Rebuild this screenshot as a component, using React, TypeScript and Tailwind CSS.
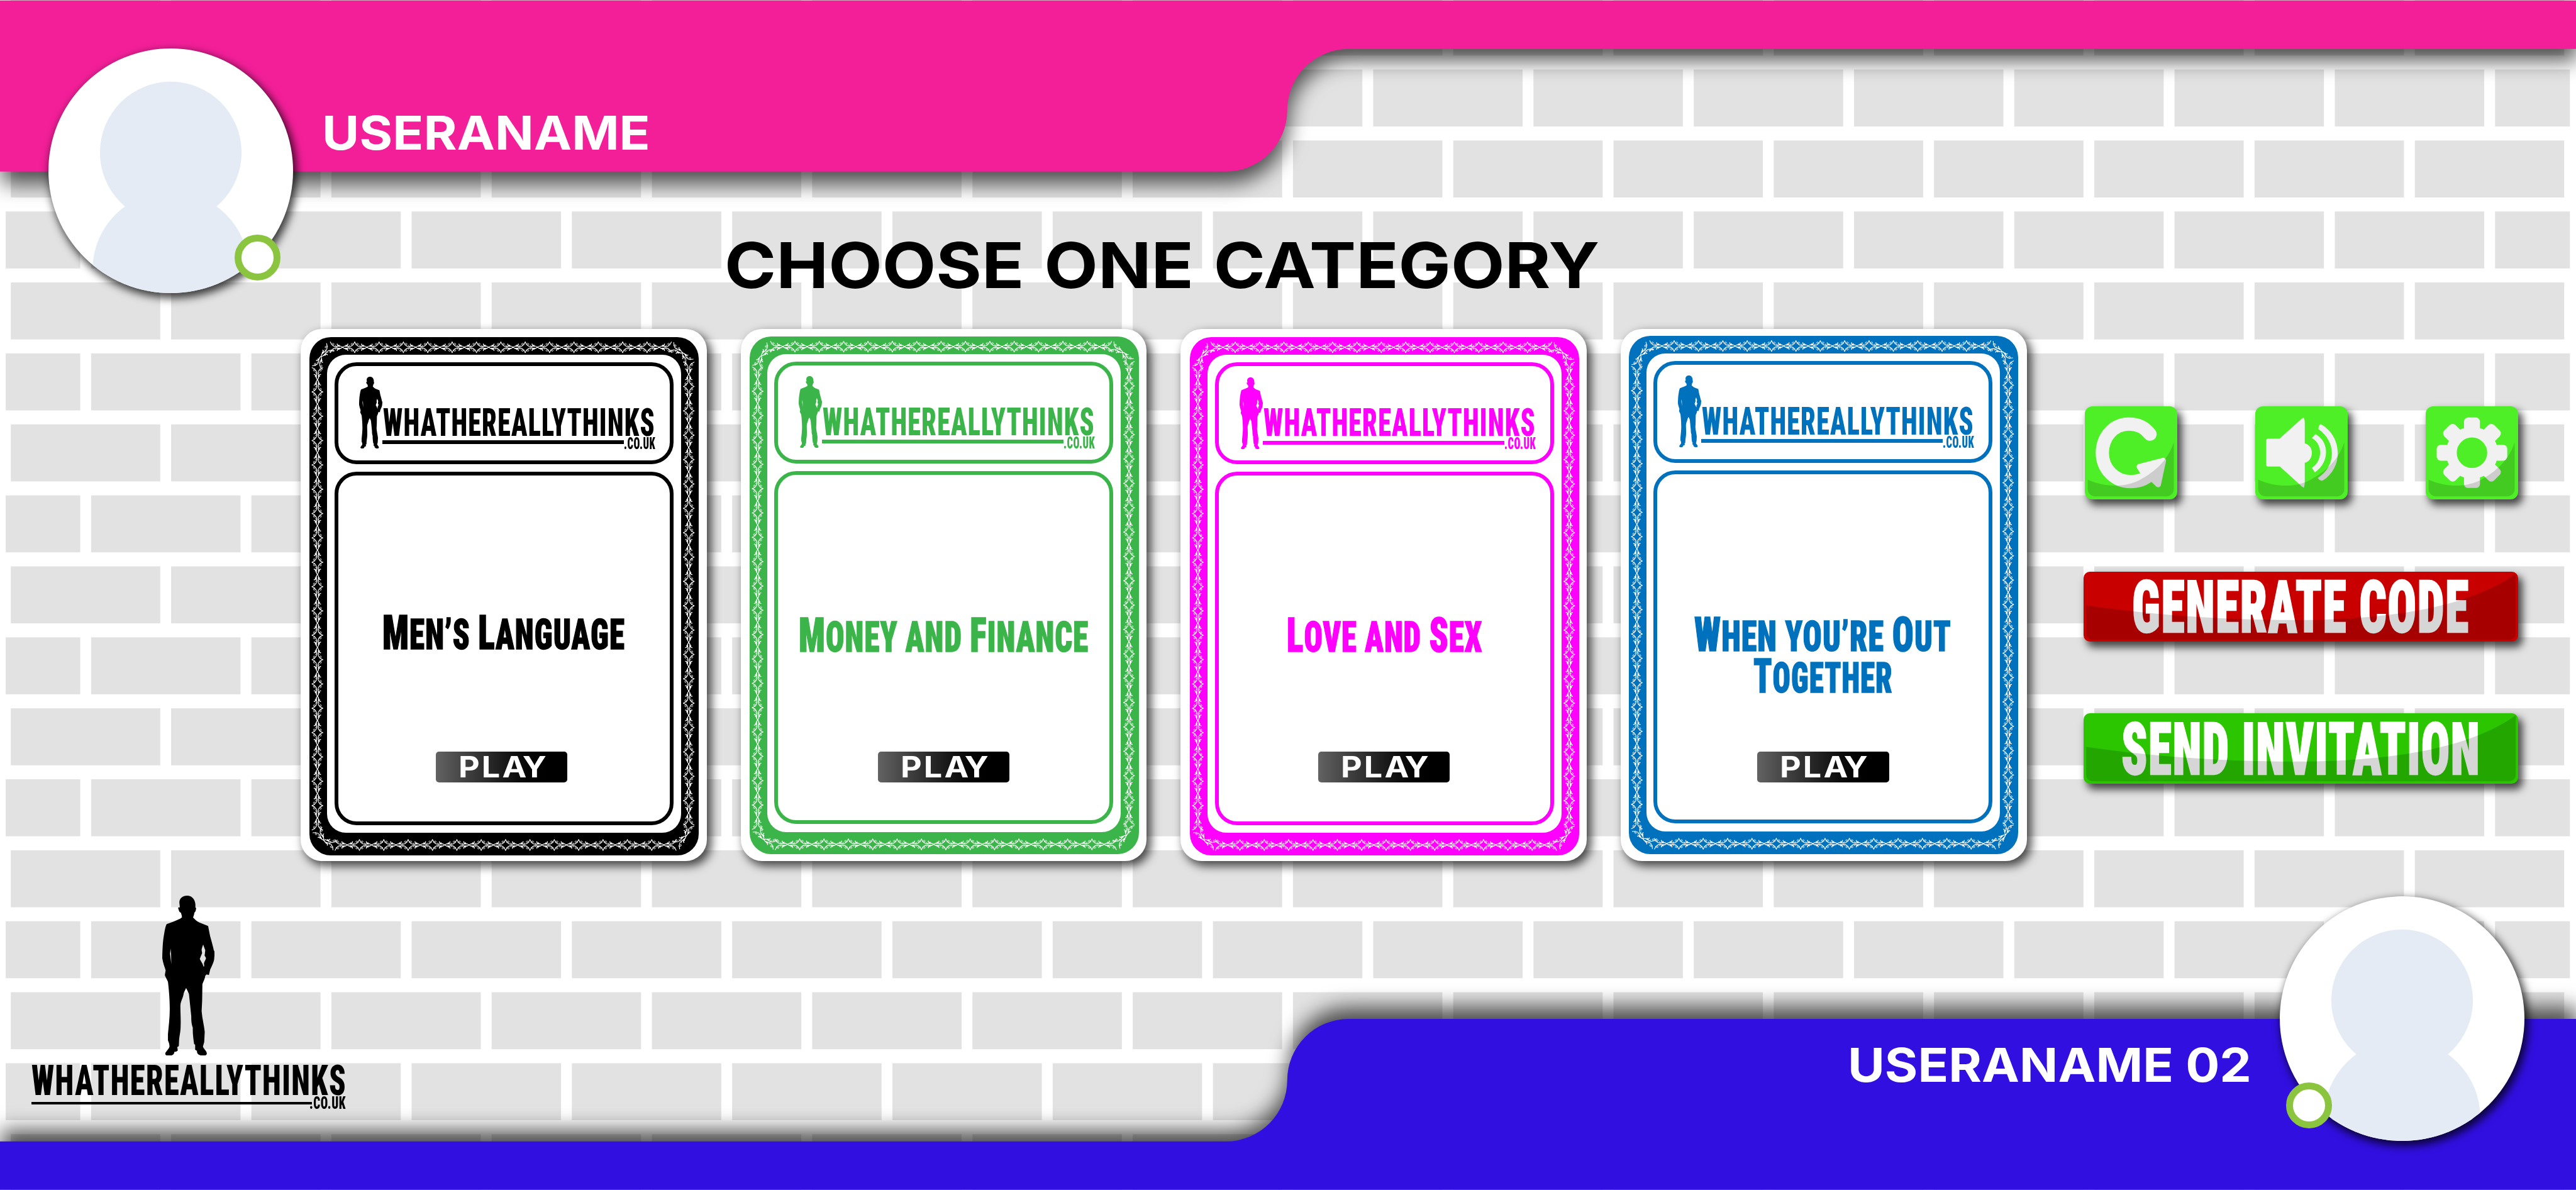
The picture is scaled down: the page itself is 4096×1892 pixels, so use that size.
import { useLayoutEffect, useRef, type ReactNode } from "react";

/* Stretches or squeezes its one line of text to the full width of the box. */
function Fit({ box, text, children }: { box: string; text: string; children: ReactNode }) {
  const outer = useRef<HTMLDivElement>(null);
  const inner = useRef<HTMLSpanElement>(null);
  useLayoutEffect(() => {
    const o = outer.current;
    const i = inner.current;
    if (!o || !i || !i.offsetWidth) return;
    i.style.transform = `scaleX(${o.clientWidth / i.offsetWidth})`;
  }, []);
  return (
    <div ref={outer} className={`flex items-center ${box}`}>
      <span ref={inner} className={`block shrink-0 origin-left whitespace-pre leading-[0.72] ${text}`}>
        {children}
      </span>
    </div>
  );
}

const wide = "font-['Inter',sans-serif] font-bold";
const narrow = "font-['Roboto',sans-serif] font-black [font-stretch:75%] pt-[0.028em] tracking-[0.02em] [-webkit-text-stroke:0.02em]";
const narrowLogo = "font-['Roboto',sans-serif] font-black [font-stretch:75%] pt-[0.028em] tracking-[0.03em]";

function Wall() {
  const rows = Array.from({ length: 17 }, (_, i) => i);
  return (
    <svg className="absolute inset-0 h-full w-full" viewBox="0 0 5076 2345" preserveAspectRatio="none">
      <g fill="#e2e2e2">
        {rows.map((r) => {
          const y = -2.9 + r * 139.87;
          if (r % 2 === 0)
            return Array.from({ length: 16 }, (_, c) => (
              <rect key={`${r}-${c}`} x={21.4 + c * 315.8} y={y} width="294.4" height="112.3" />
            ));
          return Array.from({ length: 17 }, (_, c) => {
            const x = Math.max(11.2, -136.3 + c * 315.8);
            const end = Math.min(5064, 158.1 + c * 315.8);
            return <rect key={`${r}-${c}`} x={x} y={y} width={end - x} height="112.3" />;
          });
        })}
      </g>
    </svg>
  );
}

function Avatar({ ring }: { ring: string }) {
  return (
    <div className="relative h-[389px] w-[389px] shrink-0">
      <div className="h-full w-full overflow-hidden rounded-full bg-white shadow-[4px_6px_14px_2px_rgba(0,0,0,0.75)]">
        <svg className="h-full w-full" viewBox="0 0 482 482" fill="#e4ebf4">
          <circle cx="241" cy="205" r="139.5" />
          <circle cx="241" cy="436" r="154" />
        </svg>
      </div>
      <span className={`absolute h-[73px] w-[73px] rounded-full border-[11.7px] border-[#8bc540] bg-white ${ring}`} />
    </div>
  );
}

function Man({ className }: { className: string }) {
  return (
    <svg className={className} viewBox="626 157 203 767" preserveAspectRatio="none" fill="currentColor">
      <path
        fillRule="evenodd"
        d="M722 157C740 157 753 175 754 200L754 214L757 216C756 228 754 236 750 238C749 250 746 256 745 262C752 272 760 280 768 285L803 302C806 318 808 335 811 352C817 378 822 400 825 418L829 428L826 465C822 485 814 502 811 512L806 537L797 534L792 541C790 560 783 570 781 582L780 660L778 710C780 745 788 780 790 810L788 858L783 880C788 895 799 902 798 915C796 926 780 926 770 920C762 916 760 910 760 900L753 895L753 871L749 868C746 840 743 815 744 790C738 770 738 750 738 735C735 700 732 660 729 628C724 612 720 605 718 599C715 610 710 618 709 624C706 650 697 660 696 685C696 720 698 745 697 780C697 810 692 830 691 850L690 878L684 882L686 899L680 904L673 905C672 918 665 924 652 924C640 924 636 918 638 910C644 898 652 890 654 880C654 865 650 858 648 850L648 820C651 780 655 740 655 700C655 650 651 600 648 570C644 556 638 548 636 537L639 515C634 495 628 475 626 455C627 400 629 370 632 350C636 320 638 305 643 293L668 282C682 275 695 269 702 261C702 250 699 245 698 238C692 238 690 228 687 214L694 213L692 190C692 170 705 157 722 157ZM784 391C780 405 778 412 778 418L780 432L771 460C776 475 783 482 785 497L788 495L787 480C791 468 794 462 795 456C792 448 788 445 790 440L792 418C788 405 786 398 784 391ZM658 411L656 435L661 485L660 435Z"
      />
    </svg>
  );
}

type Point = [number, number];
type Half = { at: Point; to: Point };

/* Every motif of the border is two mirrored halves that reach towards its neighbours. */
function borderHalves(): Half[] {
  const knots: Record<string, Point> = { tl: [23, 38], tr: [735, 31], br: [742, 983], bl: [28, 991] };
  const out: Half[] = [];
  const run = (n: number, start: Point, dx: number, dy: number, first: Point, last: Point) => {
    for (let i = 0; i < n; i++) {
      const at: Point = [start[0] + dx * i, start[1] + dy * i];
      out.push({ at, to: i === 0 ? first : [at[0] - dx / 2, at[1] - dy / 2] });
      out.push({ at, to: i === n - 1 ? last : [at[0] + dx / 2, at[1] + dy / 2] });
    }
  };
  run(15, [41.2, 20], 48, 0, knots.tl, knots.tr);
  run(15, [50.5, 1000.6], 48, 0, knots.bl, knots.br);
  run(20, [15.7, 60], 0, 47.95, knots.tl, knots.bl);
  run(20, [747.5, 49.3], 0, 48, knots.tr, knots.br);
  return out;
}

const HALVES = borderHalves();

function Ornament({ id }: { id: string }) {
  return (
    <svg
      className="absolute inset-0 h-full w-full"
      viewBox="0 0 767.3 1021"
      preserveAspectRatio="none"
      fill="none"
      stroke="#fff"
      strokeWidth="1.4"
      strokeLinecap="round"
    >
      <defs>
        <g id={`${id}-q`}>
          <path d="M24 .3C21 -3 17 -3 14 -1.5C9 -.5 3.5 -2.5 0 -10.5" />
          <path d="M2.2 -5C3.2 -8.6 7 -8.8 7.2 -6.2C7.2 -4.4 4.8 -4.2 4.8 -6" strokeWidth="1" />
          <path d="M19.5 -2.2C15.5 -1.6 13.8 -3 13.6 -6.4M16.8 -2.4C15.6 -3.6 16.6 -4.6 17.2 -4" strokeWidth="1.8" />
          <path d="M12.6 -1.6C11 -1.8 10.2 -2.8 10 -4" strokeWidth="1.1" />
        </g>
        <g id={id}>
          <use href={`#${id}-q`} />
          <use href={`#${id}-q`} transform="scale(1 -1)" />
        </g>
      </defs>
      {HALVES.map(({ at, to }, i) => {
        const dx = to[0] - at[0];
        const dy = to[1] - at[1];
        const len = Math.hypot(dx, dy);
        return (
          <use
            key={i}
            href={`#${id}`}
            transform={`translate(${at[0]} ${at[1]}) rotate(${(Math.atan2(dy, dx) * 180) / Math.PI}) scale(${len / 24} 1)`}
          />
        );
      })}
    </svg>
  );
}

type CardData = {
  id: string;
  ink: string;
  fill: string;
  line: string;
  band: string;
  titleTop: string;
  play: string;
  lines: { text: string; box: string }[];
};

const cards: CardData[] = [
  {
    id: "language",
    ink: "text-black",
    fill: "bg-black",
    line: "border-black",
    band: "ml-[14px] mt-[12.4px]",
    titleTop: "h-[439.3px] pt-[222.4px]",
    play: "ml-[155.2px]",
    lines: [{ text: "Men’s Language", box: "w-[386px]" }],
  },
  {
    id: "money",
    ink: "text-[#3bb54a]",
    fill: "bg-[#3bb54a]",
    line: "border-[#3bb54a]",
    band: "ml-[13.8px] mt-[11.1px]",
    titleTop: "h-[440.8px] pt-[227.3px]",
    play: "ml-[158.6px]",
    lines: [{ text: "Money and Finance", box: "w-[461px]" }],
  },
  {
    id: "love",
    ink: "text-[#ff00ff]",
    fill: "bg-[#ff00ff]",
    line: "border-[#ff00ff]",
    band: "ml-[14.7px] mt-[12.6px]",
    titleTop: "h-[439.3px] pt-[225.7px]",
    play: "ml-[157.8px]",
    lines: [{ text: "Love and Sex", box: "w-[311px]" }],
  },
  {
    id: "out",
    ink: "text-[#0071bc]",
    fill: "bg-[#0071bc]",
    line: "border-[#0071bc]",
    band: "ml-[12.7px] mt-[10.2px]",
    titleTop: "h-[441.4px] pt-[228px]",
    play: "ml-[158.8px]",
    lines: [
      { text: "When you’re Out", box: "w-[409px]" },
      { text: "Together", box: "w-[222px]" },
    ],
  },
];

function SmallCaps({ text }: { text: string }) {
  const runs = text.match(/[A-Z]|[^A-Z]+/g) ?? [];
  return (
    <>
      {runs.map((run, i) => (
        <span key={i} className={/[A-Z]/.test(run) ? "" : "text-[0.885em] uppercase"}>
          {run}
        </span>
      ))}
    </>
  );
}

function Card({ c }: { c: CardData }) {
  return (
    <article className="h-[845.7px] w-[645.6px] shrink-0 rounded-[34px] bg-white shadow-[6px_7px_15px_1px_rgba(0,0,0,0.7)]">
      <div
        className={`relative h-[823.9px] w-[619.2px] rounded-[34px] pb-[35.7px] pl-[28px] pr-[28.7px] pt-[28.4px] ${c.band} ${c.fill} ${c.ink}`}
      >
        <Ornament id={`motif-${c.id}`} />
        <div className="relative flex h-full flex-col gap-[11.8px] rounded-[30px] bg-white px-[11.8px] pt-[11.9px]">
          <div className={`flex h-[162px] rounded-[35px] border-[6px] ${c.line}`}>
            <Man className="ml-[32.7px] mt-[17.2px] h-[114px] w-[37.1px]" />
            <div className="mt-[67.5px]">
              <Fit box="ml-[1px] h-[43.6px] w-[433px]" text={`text-[61.3px] ${narrowLogo}`}>
                WHATHEREALLYTHINKS
              </Fit>
              <div className="flex">
                <div className={`mt-[7.2px] h-[5.9px] w-[384px] ${c.fill}`} />
                <Fit box="mt-[2.3px] h-[18.8px] w-[49.5px]" text={`text-[26.4px] ${narrowLogo}`}>
                  .CO.UK
                </Fit>
              </div>
            </div>
          </div>
          <div className={`h-[561.6px] rounded-[35px] border-[6px] ${c.line}`}>
            <div className={`flex flex-col items-center gap-[12px] ${c.titleTop}`}>
              {c.lines.map((l) => (
                <Fit key={l.text} box={`h-[53.7px] ${l.box}`} text={`text-[75.6px] ${narrow}`}>
                  <SmallCaps text={l.text} />
                </Fit>
              ))}
            </div>
            <button
              className={`flex h-[48.8px] w-[209.3px] items-center justify-center rounded-[5px] bg-linear-to-r from-[#636363] to-black to-92% ${c.play}`}
            >
              <Fit box="h-[33.4px] w-[137px]" text={`text-[46px] text-white ${wide}`}>
                <span className="tracking-[0.06em]">PL</span>
                <span className="tracking-[-0.05em]">AY</span>
              </Fit>
            </button>
          </div>
        </div>
      </div>
    </article>
  );
}

function IconButton({ label, children }: { label: string; children: ReactNode }) {
  return (
    <button
      aria-label={label}
      className="h-[148px] w-[147.2px] rounded-[12px] bg-[#4fef28] shadow-[6px_8px_13px_1px_rgba(0,0,0,0.7)]"
    >
      <svg className="h-full w-full" viewBox="0 0 182.4 183.5" preserveAspectRatio="none">
        {children}
        <path
          d="M5.7 144.3C40 160 82 161 112 143C146 124 166 100 175.4 70.6V163a14.5 14.5 0 0 1 -14.5 14.5H20.2a14.5 14.5 0 0 1 -14.5 -14.5Z"
          fill="#000"
          fillOpacity="0.15"
        />
      </svg>
    </button>
  );
}

function WideButton({ fill, box, label }: { fill: string; box: string; label: string }) {
  return (
    <button
      className={`relative flex h-[111.9px] w-[691.2px] items-center justify-center rounded-[10px] shadow-[6px_8px_13px_1px_rgba(0,0,0,0.7)] ${fill}`}
    >
      <Fit box={`h-[81.9px] ${box}`} text={`text-[115px] text-white ${narrow}`}>
        {label}
      </Fit>
      <svg className="absolute inset-0 h-full w-full" viewBox="0 0 856 138.6" preserveAspectRatio="none">
        <path
          d="M5 66.4C140 86 280 95.2 415 95.2C600 95.2 760 70 851 4V122a12 12 0 0 1 -12 12H17a12 12 0 0 1 -12 -12Z"
          fill="#000"
          fillOpacity="0.16"
        />
      </svg>
    </button>
  );
}

export default function App() {
  return (
    <div className="relative flex h-[1892px] w-[4096px] flex-col overflow-hidden bg-white">
      <Wall />

      <header className="relative z-10 h-[273px] shrink-0">
        <svg
          className="absolute left-0 top-0 h-[273px] w-[4096px] overflow-visible drop-shadow-[2px_19px_16px_rgba(0,0,0,0.65)]"
          viewBox="0 0 5076 338.3"
          preserveAspectRatio="none"
        >
          <path fill="#f31f99" d="M0 1H5076V96.5H2657A121 121 0 0 0 2536.5 217A121 121 0 0 1 2415 338H0Z" />
        </svg>
        <div className="relative flex pl-[77px] pt-[77px]">
          <Avatar ring="bottom-[20.4px] right-[20.4px]" />
          <Fit box="ml-[46px] mt-[107.6px] h-[54.2px] w-[522px]" text={`text-[74.6px] text-white ${wide}`}>
            USERANAME
          </Fit>
        </div>
      </header>

      <main className="relative h-[1096px] shrink-0 pt-[112px]">
        <h1 className="pl-[1152px]">
          <Fit box="h-[73.4px] w-[1391px]" text={`text-[101px] text-black [word-spacing:0.05em] ${wide}`}>
            CHOOSE ONE CATEGORY
          </Fit>
        </h1>
        <div className="flex pl-[478.2px] pt-[65.1px]">
          <div className="flex gap-[54px]">
            {cards.map((c) => (
              <Card key={c.id} c={c} />
            ))}
          </div>
          <aside className="ml-[90.5px] flex flex-col pt-[122.3px]">
            <div className="flex justify-between pl-[2px]">
              <IconButton label="Replay">
                <path
                  d="M128.500 55C118 41 104 35 87 35C55 35 34.500 62 34.500 92C34.500 122 58 148.500 90 148.500C104 148.500 116 146 128 135"
                  fill="none"
                  stroke="#f1f1f1"
                  strokeWidth="26"
                  strokeLinecap="round"
                />
                <path
                  d="M107.500 119L154.500 107L144.500 154L132 142L112.500 127Z"
                  fill="#f1f1f1"
                  stroke="#f1f1f1"
                  strokeWidth="11"
                  strokeLinejoin="round"
                />
              </IconButton>
              <IconButton label="Sound">
                <g transform="scale(.63776 .52296) translate(-618 -77)" fill="#f1f1f1">
                  <path d="M652 205Q652 200 658 199L693 199L762 123Q768 117 769 124Q771 130 771 140V217C785 221 793 236 793 252C793 270 785 286 771 290V360Q771 376 768 384L762 379L694 304L658 304Q652 304 652 298Z" />
                  <path d="M804 182C848 210 848 290 802 326L793 309C826 285 828 220 793 197Z" />
                  <path d="M820 144C889 190 890 310 826 357Q820 360 811 347C868 305 870 210 813 163Q814 148 820 144Z" />
                </g>
              </IconButton>
              <IconButton label="Settings">
                <g transform="translate(91.2 91.5)">
                  {[0, 45, 90, 135, 180, 225, 270, 315].map((a) => (
                    <rect
                      key={a}
                      x="-15.7"
                      y="-69.500"
                      width="31.4"
                      height="32"
                      rx="8"
                      fill="#f1f1f1"
                      transform={`rotate(${a})`}
                    />
                  ))}
                  <circle r="40.500" fill="none" stroke="#f1f1f1" strokeWidth="21" />
                </g>
              </IconButton>
            </div>
            <div className="mt-[114.8px]">
              <WideButton fill="bg-[#c80000]" box="w-[537px]" label="GENERATE CODE" />
            </div>
            <div className="mt-[114px]">
              <WideButton fill="bg-[#2cc600]" box="w-[571px]" label="SEND INVITATION" />
            </div>
          </aside>
        </div>
      </main>

      <footer className="relative h-[523px] shrink-0">
        <svg
          className="absolute bottom-0 left-0 h-[272.5px] w-[4096px] overflow-visible drop-shadow-[2px_-19px_16px_rgba(0,0,0,0.65)]"
          viewBox="0 0 5076 338"
          preserveAspectRatio="none"
        >
          <path fill="#310fe0" d="M0 337H5076V0H2657A121 121 0 0 0 2536.5 121A121 121 0 0 1 2416 241.7H0Z" />
        </svg>
        <div className="relative flex justify-between">
          <div className="pl-[50.2px] pt-[54.9px]">
            <Man className="ml-[207.5px] h-[254.6px] w-[83.6px]" />
            <Fit box="mt-[15.3px] h-[47.4px] w-[501px]" text={`text-[66.7px] ${narrowLogo}`}>
              WHATHEREALLYTHINKS
            </Fit>
            <div className="flex">
              <div className="mt-[11.3px] h-[4px] w-[445.9px] bg-black" />
              <Fit box="-ml-[4px] mt-[3.5px] h-[19.2px] w-[58px]" text={`text-[27px] ${narrowLogo}`}>
                .CO.UK
              </Fit>
            </div>
          </div>
          <div className="flex pr-[82px] pt-[55.9px]">
            <Fit box="mr-[45.500px] mt-[242.300px] h-[53.8px] w-[642px]" text={`text-[74px] text-white ${wide}`}>
              USERANAME 02
            </Fit>
            <Avatar ring="bottom-[20.4px] left-[10px]" />
          </div>
        </div>
      </footer>
    </div>
  );
}
